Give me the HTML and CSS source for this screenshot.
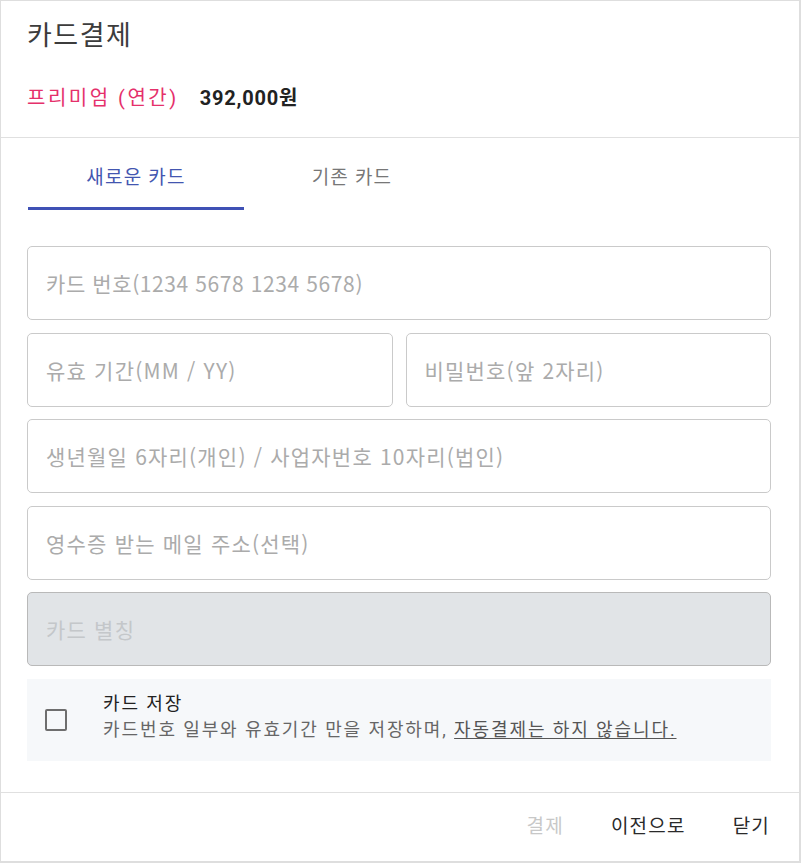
FILE: index.html
```html
<!DOCTYPE html>
<html lang="ko">
<head>
<meta charset="utf-8">
<title>카드결제</title>
<link rel="stylesheet" href="styles.css">
</head>
<body>
<div class="dialog">
  <header class="head">
    <h1 class="title">카드결제</h1>
    <div class="price">
      <span class="plan">프리미엄 (연간)</span>
      <span class="amount">392,000원</span>
    </div>
  </header>

  <nav class="tabs">
    <div class="tab active">새로운 카드</div>
    <div class="tab">기존 카드</div>
  </nav>

  <form class="form">
    <input class="field digits" type="text" placeholder="카드 번호(1234 5678 1234 5678)">
    <div class="row">
      <input class="field" type="text" placeholder="유효 기간(MM / YY)">
      <input class="field" type="text" placeholder="비밀번호(앞 2자리)">
    </div>
    <input class="field" type="text" placeholder="생년월일 6자리(개인) / 사업자번호 10자리(법인)">
    <input class="field" type="text" placeholder="영수증 받는 메일 주소(선택)">
    <input class="field disabled" type="text" placeholder="카드 별칭" disabled>

    <label class="save">
      <span class="check"></span>
      <span class="save-text">
        <span class="save-title">카드 저장</span>
        <span class="save-desc">카드번호 일부와 유효기간 만을 저장하며, <u>자동결제는 하지 않습니다.</u></span>
      </span>
    </label>
  </form>

  <footer class="foot">
    <button class="btn off" type="button">결제</button>
    <button class="btn" type="button">이전으로</button>
    <button class="btn" type="button">닫기</button>
  </footer>
</div>
</body>
</html>
```

FILE: styles.css
```css
* { box-sizing: border-box; }

html, body {
  margin: 0;
  padding: 0;
  background: #fff;
}

body {
  font-family: Roboto, "Noto Sans CJK KR", sans-serif;
  color: #333;
}

.dialog {
  width: 801px;
  height: 863px;
  border-style: solid;
  border-color: #dedede;
  border-width: 1px 2px 2px 1px;
  display: flex;
  flex-direction: column;
  background: #fff;
}

.head {
  height: 137px;
  border-bottom: 1px solid #e0e0e0;
  padding: 17px 26px 0 26px;
  flex: none;
}

.title {
  margin: 0;
  font-size: 27px;
  letter-spacing: 1.5px;
  line-height: 36px;
  font-weight: 400;
  color: #3c3c3c;
}

.price {
  margin-top: 30px;
  display: flex;
  align-items: center;
  gap: 21px;
  line-height: 28px;
}

.plan {
  font-size: 20px;
  letter-spacing: 2.5px;
  color: #e5306b;
}

.amount {
  font-size: 20px;
  letter-spacing: 0.8px;
  font-weight: 700;
  color: #222;
}

.tabs {
  display: flex;
  padding: 0 27px;
  flex: none;
}

.tab {
  width: 216px;
  height: 72px;
  padding-top: 6px;
  display: flex;
  align-items: center;
  justify-content: center;
  font-size: 19px;
  letter-spacing: 1.2px;
  color: #777;
  border-bottom: 3px solid transparent;
}

.tab.active {
  color: #4356b0;
  border-bottom-color: #3f51b5;
}

.form {
  margin: 36px 0 0;
  padding: 0 28px 0 26px;
  display: flex;
  flex-direction: column;
  gap: 12.5px;
  flex: none;
}

.row {
  display: grid;
  grid-template-columns: 1fr 1fr;
  gap: 13px;
}

.field {
  display: block;
  width: 100%;
  height: 74px;
  margin: 0;
  padding: 0 18px;
  border: 1px solid #cacaca;
  border-radius: 5px;
  background: #fff;
  font-family: "Noto Sans CJK KR", Roboto, sans-serif;
  font-size: 21px;
  letter-spacing: 1.2px;
  color: #333;
  outline: none;
}

.field.digits {
  letter-spacing: 0.6px;
}

.field::placeholder {
  color: #ababab;
  opacity: 1;
}

.field.disabled {
  background: #e1e4e7;
  border-color: #b9b9b9;
}

.field.disabled::placeholder {
  color: #c4c7ca;
}

.save {
  display: flex;
  align-items: center;
  height: 82px;
  background: #f6f8fa;
  padding-left: 18px;
}

.check {
  width: 22px;
  height: 22px;
  border: 2px solid #6e6e6e;
  border-radius: 2px;
  flex: none;
  margin-right: 36px;
}

.save-text {
  display: flex;
  flex-direction: column;
  line-height: 26px;
  margin-top: -5px;
  letter-spacing: 1.9px;
}

.save-title {
  font-size: 18px;
  color: #222;
}

.save-desc {
  font-size: 18px;
  color: #666;
}

.save-desc u {
  color: #555;
  text-underline-offset: 2px;
}

.foot {
  margin-top: 31px;
  border-top: 1px solid #e0e0e0;
  flex: 1;
  display: flex;
  align-items: center;
  justify-content: flex-end;
  padding-right: 5px;
}

.btn {
  font-family: Roboto, "Noto Sans CJK KR", sans-serif;
  font-size: 19px;
  letter-spacing: 1.2px;
  color: #2a2a2a;
  background: none;
  border: 0;
  padding: 0 24px 0 23px;
  margin: 0;
  line-height: 36px;
  cursor: pointer;
}

.btn.off {
  color: #c8c8c8;
}
```
